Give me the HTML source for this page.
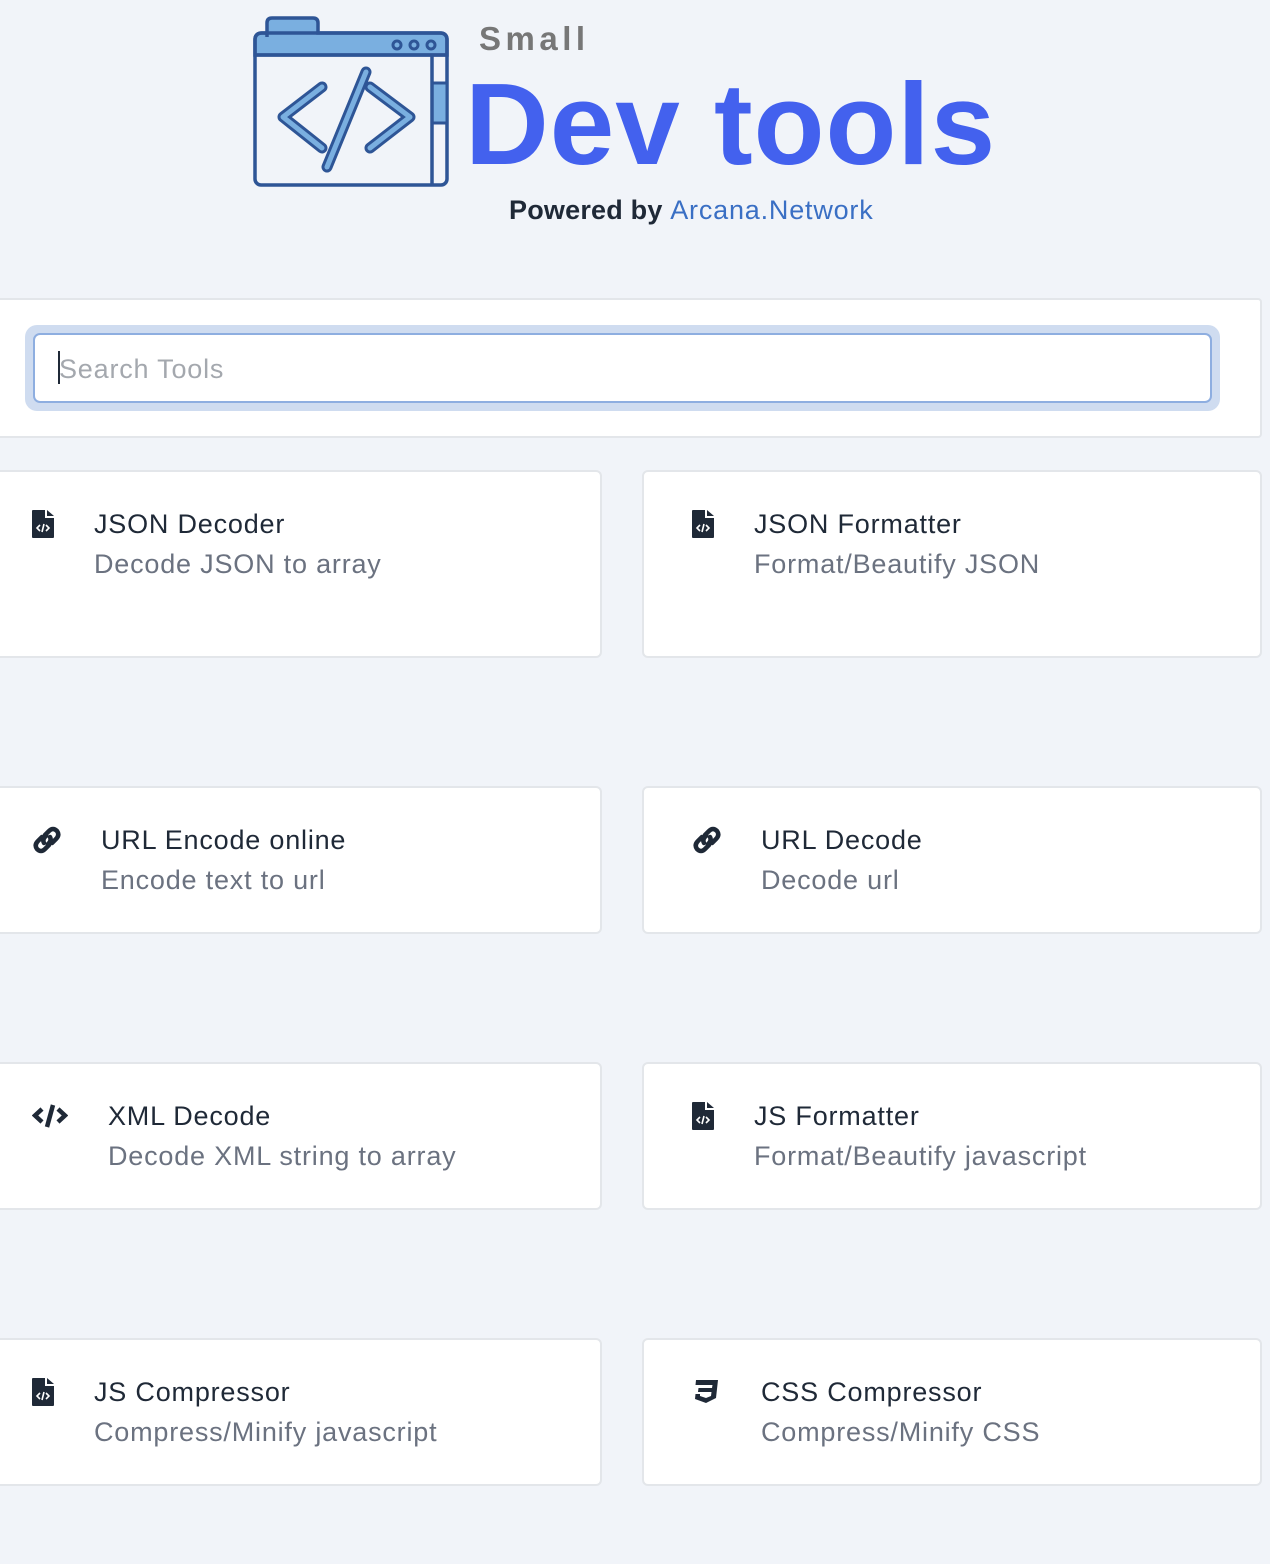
<!DOCTYPE html>
<html><head><meta charset="utf-8"><style>
body{margin:0;background:#f1f4f9;font-family:"Liberation Sans",sans-serif;width:1270px;height:1564px;overflow:hidden;position:relative}
.a{position:absolute}
.card{position:absolute;background:#fff;border:2px solid #e3e6ea;border-radius:6px;box-sizing:border-box}
.t{position:absolute;font-size:27px;color:#1f2937;white-space:nowrap;letter-spacing:0.8px}
.s{position:absolute;font-size:27px;color:#6b7280;white-space:nowrap;letter-spacing:0.8px}
</style></head><body>
<svg class="a" style="left:250px;top:15px" width="200" height="175" viewBox="0 0 200 175">
<path d="M17 22 V8 Q17 3 22 3 H63 Q68 3 68 8 V18 H190 Q197 18 197 25 V40 H5 V25 Q5 18 12 18 H17Z" fill="#7aafe0" stroke="#2e5596" stroke-width="3.5"/>
<rect x="5" y="18" width="192" height="152" rx="6" fill="none" stroke="#2e5596" stroke-width="3.5"/>
<line x1="5" y1="40" x2="197" y2="40" stroke="#2e5596" stroke-width="3.5"/>
<rect x="182" y="68" width="15" height="40" fill="#7aafe0" stroke="#2e5596" stroke-width="3"/>
<line x1="182" y1="40" x2="182" y2="170" stroke="#2e5596" stroke-width="3.5"/>
<circle cx="147" cy="30" r="4" fill="none" stroke="#2e5596" stroke-width="3"/><circle cx="164" cy="30" r="4" fill="none" stroke="#2e5596" stroke-width="3"/><circle cx="181" cy="30" r="4" fill="none" stroke="#2e5596" stroke-width="3"/>
<g fill="none" stroke-linecap="round" stroke-linejoin="round">
<path d="M72 72 L33 102 L72 133 M116 57 L77 152 M120 72 L160 102 L120 133" stroke="#2e5596" stroke-width="11"/>
<path d="M72 72 L33 102 L72 133 M116 57 L77 152 M120 72 L160 102 L120 133" stroke="#7aafe0" stroke-width="5"/>
</g></svg>
<div class="a" style="left:479px;top:20px;font-size:33px;font-weight:bold;color:#777;letter-spacing:4.5px">Small</div>
<div class="a" style="left:465px;top:54px;font-size:116px;font-weight:bold;color:#4361ee;letter-spacing:1px;line-height:140px">Dev tools</div>
<div class="a" style="left:509px;top:195px;font-size:27px;color:#1f2937;font-weight:bold;letter-spacing:0.2px">Powered by <span style="color:#3a6fc4;font-weight:normal;letter-spacing:0.8px">Arcana.Network</span></div>

<div class="card" style="left:-10px;top:298px;width:1272px;height:140px;border-radius:4px"></div>
<div class="a" style="left:25px;top:325px;width:1195px;height:86px;border-radius:12px;background:#cfdcf0"></div>
<div class="a" style="left:33px;top:333px;width:1179px;height:70px;border-radius:7px;background:#fff;border:2px solid #8eaee0;box-sizing:border-box"></div>
<div class="a" style="left:58px;top:351px;width:2px;height:33px;background:#1f2937"></div>
<div class="a" style="left:59px;top:354px;font-size:27px;color:#a4a8ae;letter-spacing:0.8px">Search Tools</div>

<div class="card" style="left:-10px;top:470px;width:612px;height:188px"></div>
<div class="card" style="left:642px;top:470px;width:620px;height:188px"></div>
<div class="card" style="left:-10px;top:786px;width:612px;height:148px"></div>
<div class="card" style="left:642px;top:786px;width:620px;height:148px"></div>
<div class="card" style="left:-10px;top:1062px;width:612px;height:148px"></div>
<div class="card" style="left:642px;top:1062px;width:620px;height:148px"></div>
<div class="card" style="left:-10px;top:1338px;width:612px;height:148px"></div>
<div class="card" style="left:642px;top:1338px;width:620px;height:148px"></div>

<svg class="a" style="left:32px;top:510px" width="22" height="28" viewBox="0 0 22 28"><path d="M0 1 Q0 0 1 0 H13 V8 H22 V27 Q22 28 21 28 H1 Q0 28 0 27Z" fill="#1f2937"/><path d="M15 0 L22 6 H15Z" fill="#1f2937"/><path d="M8 15 L5 18 L8 21 M14 15 L17 18 L14 21 M12 14 L10 22" stroke="#fff" stroke-width="1.6" fill="none"/></svg>
<svg class="a" style="left:692px;top:510px" width="22" height="28" viewBox="0 0 22 28"><path d="M0 1 Q0 0 1 0 H13 V8 H22 V27 Q22 28 21 28 H1 Q0 28 0 27Z" fill="#1f2937"/><path d="M15 0 L22 6 H15Z" fill="#1f2937"/><path d="M8 15 L5 18 L8 21 M14 15 L17 18 L14 21 M12 14 L10 22" stroke="#fff" stroke-width="1.6" fill="none"/></svg>
<svg class="a" style="left:692px;top:1102px" width="22" height="28" viewBox="0 0 22 28"><path d="M0 1 Q0 0 1 0 H13 V8 H22 V27 Q22 28 21 28 H1 Q0 28 0 27Z" fill="#1f2937"/><path d="M15 0 L22 6 H15Z" fill="#1f2937"/><path d="M8 15 L5 18 L8 21 M14 15 L17 18 L14 21 M12 14 L10 22" stroke="#fff" stroke-width="1.6" fill="none"/></svg>
<svg class="a" style="left:32px;top:1378px" width="22" height="28" viewBox="0 0 22 28"><path d="M0 1 Q0 0 1 0 H13 V8 H22 V27 Q22 28 21 28 H1 Q0 28 0 27Z" fill="#1f2937"/><path d="M15 0 L22 6 H15Z" fill="#1f2937"/><path d="M8 15 L5 18 L8 21 M14 15 L17 18 L14 21 M12 14 L10 22" stroke="#fff" stroke-width="1.6" fill="none"/></svg>
<svg class="a" style="left:32px;top:825px" width="30" height="30" viewBox="0 0 30 30"><g fill="none" stroke="#1f2937" stroke-width="4.5" stroke-linecap="round"><path d="M13 10 L17 6 Q21 2 25 6 Q28 10 24 14 L20 18"/><path d="M17 20 L13 24 Q9 28 5 24 Q2 20 6 16 L10 12"/><path d="M12 18 Q10 14 14 11 M18 12 Q20 16 16 19"/></g></svg>
<svg class="a" style="left:692px;top:825px" width="30" height="30" viewBox="0 0 30 30"><g fill="none" stroke="#1f2937" stroke-width="4.5" stroke-linecap="round"><path d="M13 10 L17 6 Q21 2 25 6 Q28 10 24 14 L20 18"/><path d="M17 20 L13 24 Q9 28 5 24 Q2 20 6 16 L10 12"/><path d="M12 18 Q10 14 14 11 M18 12 Q20 16 16 19"/></g></svg>
<svg class="a" style="left:32px;top:1103px" width="36" height="26" viewBox="0 0 36 26"><g fill="none" stroke="#1f2937" stroke-width="4.5"><path d="M10 6 L3 12.5 L10 19 M26 6 L33 12.5 L26 19"/><path d="M21 2 L15 24"/></g></svg>
<svg class="a" style="left:692px;top:1378px" width="28" height="28" viewBox="0 0 28 28"><path d="M4 2 H26 L24 20 L14 25 L3 21 L3.5 16 H8 L8 18 L14 20 L19 18 L19.5 14 H6 L6.5 10 H20 L20.5 7 H3.5Z" fill="#1f2937"/></svg>

<div class="t" style="left:94px;top:509px">JSON Decoder</div><div class="s" style="left:94px;top:549px">Decode JSON to array</div>
<div class="t" style="left:754px;top:509px">JSON Formatter</div><div class="s" style="left:754px;top:549px">Format/Beautify JSON</div>
<div class="t" style="left:101px;top:825px">URL Encode online</div><div class="s" style="left:101px;top:865px">Encode text to url</div>
<div class="t" style="left:761px;top:825px">URL Decode</div><div class="s" style="left:761px;top:865px">Decode url</div>
<div class="t" style="left:108px;top:1101px">XML Decode</div><div class="s" style="left:108px;top:1141px">Decode XML string to array</div>
<div class="t" style="left:754px;top:1101px">JS Formatter</div><div class="s" style="left:754px;top:1141px">Format/Beautify javascript</div>
<div class="t" style="left:94px;top:1377px">JS Compressor</div><div class="s" style="left:94px;top:1417px">Compress/Minify javascript</div>
<div class="t" style="left:761px;top:1377px">CSS Compressor</div><div class="s" style="left:761px;top:1417px">Compress/Minify CSS</div>
</body></html>
